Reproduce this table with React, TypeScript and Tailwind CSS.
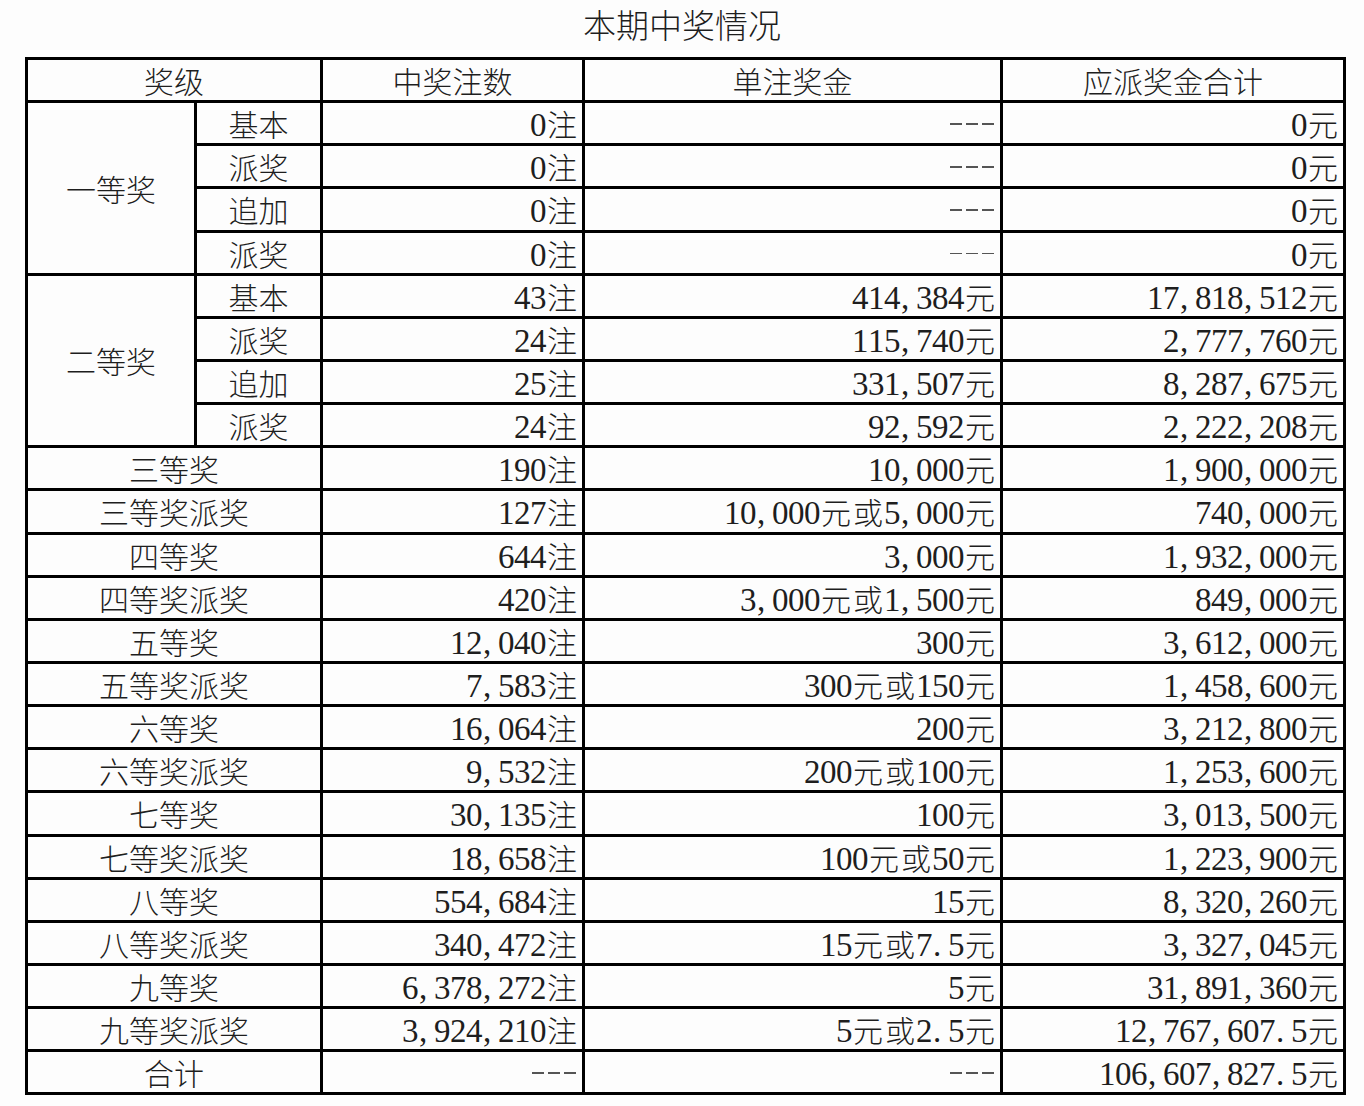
import React from 'react';

// 一等奖 / 二等奖 have four sub rows each
const groups = [
  {
    name: '一等奖',
    rows: [
      ['基本', '0注', '---', '0元'],
      ['派奖', '0注', '---', '0元'],
      ['追加', '0注', '---', '0元'],
      ['派奖', '0注', '---', '0元'],
    ],
  },
  {
    name: '二等奖',
    rows: [
      ['基本', '43注', '414,384元', '17,818,512元'],
      ['派奖', '24注', '115,740元', '2,777,760元'],
      ['追加', '25注', '331,507元', '8,287,675元'],
      ['派奖', '24注', '92,592元', '2,222,208元'],
    ],
  },
];

const singles = [
  ['三等奖', '190注', '10,000元', '1,900,000元'],
  ['三等奖派奖', '127注', '10,000元或5,000元', '740,000元'],
  ['四等奖', '644注', '3,000元', '1,932,000元'],
  ['四等奖派奖', '420注', '3,000元或1,500元', '849,000元'],
  ['五等奖', '12,040注', '300元', '3,612,000元'],
  ['五等奖派奖', '7,583注', '300元或150元', '1,458,600元'],
  ['六等奖', '16,064注', '200元', '3,212,800元'],
  ['六等奖派奖', '9,532注', '200元或100元', '1,253,600元'],
  ['七等奖', '30,135注', '100元', '3,013,500元'],
  ['七等奖派奖', '18,658注', '100元或50元', '1,223,900元'],
  ['八等奖', '554,684注', '15元', '8,320,260元'],
  ['八等奖派奖', '340,472注', '15元或7.5元', '3,327,045元'],
  ['九等奖', '6,378,272注', '5元', '31,891,360元'],
  ['九等奖派奖', '3,924,210注', '5元或2.5元', '12,767,607.5元'],
  ['合计', '---', '---', '106,607,827.5元'],
];

// fixed-pitch like a Song typeface: ascii 16px, hanzi 32px
const Num: React.FC<{ text: string }> = ({ text }) => (
  <span className="inline-flex items-baseline justify-end translate-y-[2px]">
    {text.split('').map((ch, i) => {
      if (ch === '-')
        return (
          <span key={i} className="relative inline-block w-[16px] h-[30px]">
            <span className="absolute left-[2px] right-[2px] top-[14px] h-[1.5px] bg-[#555]" />
          </span>
        );
      if (ch === ',' || ch === '.')
        return (
          <span key={i} className="inline-block w-[16px] pl-[1px] text-left text-[33px] font-['Liberation_Serif',serif]">
            {ch}
          </span>
        );
      if (/[0-9]/.test(ch))
        return (
          <span key={i} className="inline-block w-[16px] text-center text-[33px] font-['Liberation_Serif',serif]">
            {ch}
          </span>
        );
      return (
        <span key={i} className="inline-block w-[32px] text-center">
          {ch}
        </span>
      );
    })}
  </span>
);

const cell = 'border-[3px] border-black h-[43.15px] p-0 leading-none';
const numCell = `${cell} text-right pr-[4px]`;

export default function App() {
  return (
    <div className="w-[1364px] h-[1106px] bg-[#fdfdfd] text-[#1e1e1e] font-['Noto_Sans_CJK_SC',sans-serif] font-light overflow-hidden">
      <div className="h-[46px] pt-[2px] flex items-center justify-center text-[33px] leading-none">本期中奖情况</div>
      <table className="ml-[25px] mt-[11px] w-[1318px] table-fixed border-collapse text-[30px]">
        <colgroup>
          <col className="w-[169px]" />
          <col className="w-[126px]" />
          <col className="w-[262px]" />
          <col className="w-[418px]" />
          <col className="w-[343px]" />
        </colgroup>
        <thead>
          <tr>
            <th colSpan={2} className={`${cell} font-light`}>奖级</th>
            <th className={`${cell} font-light`}>中奖注数</th>
            <th className={`${cell} font-light`}>单注奖金</th>
            <th className={`${cell} font-light`}>应派奖金合计</th>
          </tr>
        </thead>
        <tbody>
          {groups.map((g) =>
            g.rows.map((r, i) => (
              <tr key={g.name + i}>
                {i === 0 && (
                  <td rowSpan={4} className={`${cell} text-center`}>
                    {g.name}
                  </td>
                )}
                <td className={`${cell} text-center`}>{r[0]}</td>
                <td className={numCell}><Num text={r[1]} /></td>
                <td className={numCell}><Num text={r[2]} /></td>
                <td className={numCell}><Num text={r[3]} /></td>
              </tr>
            ))
          )}
          {singles.map((r) => (
            <tr key={r[0]}>
              <td colSpan={2} className={`${cell} text-center`}>{r[0]}</td>
              <td className={numCell}><Num text={r[1]} /></td>
              <td className={numCell}><Num text={r[2]} /></td>
              <td className={numCell}><Num text={r[3]} /></td>
            </tr>
          ))}
        </tbody>
      </table>
    </div>
  );
}
